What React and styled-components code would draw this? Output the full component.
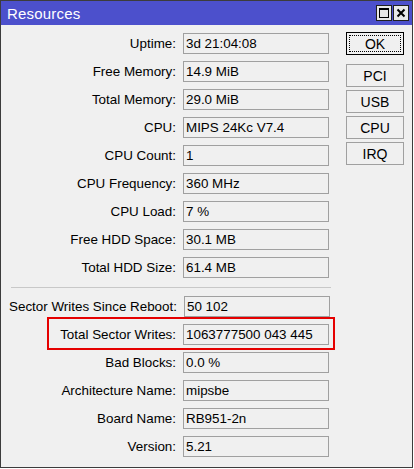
import React from 'react';
import styled, { createGlobalStyle } from 'styled-components';

const GlobalStyle = createGlobalStyle`
  html, body {
    margin: 0;
    padding: 0;
    background: #ffffff;
  }
  body {
    font-family: 'Liberation Sans', Arial, sans-serif;
    font-size: 13.4px;
    color: #000000;
  }
`;

const Window = styled.div`
  width: 413px;
  height: 468px;
  box-sizing: border-box;
  border: 1px solid #3c3c3c;
  background: #f0f0f0;
  display: flex;
  flex-direction: column;
`;

const TitleBar = styled.div`
  height: 24px;
  background: #4c50cc;
  display: flex;
  align-items: center;
  justify-content: space-between;
  padding: 0 3px 0 6px;
`;

const Title = styled.span`
  color: #ffffff;
  font-size: 15px;
  letter-spacing: 0.2px;
`;

const TitleButtons = styled.div`
  display: flex;
  gap: 1px;
`;

const TitleButton = styled.div`
  width: 14px;
  height: 14px;
  background: #e8e8e8;
  border: 1px solid #202020;
  display: flex;
  align-items: center;
  justify-content: center;
`;

const Body = styled.div`
  display: flex;
  padding: 8px 0 0 8px;
  gap: 15px;
`;

const Form = styled.div`
  display: flex;
  flex-direction: column;
  gap: 7px;
`;

const Row = styled.div`
  position: relative;
  display: flex;
  align-items: center;
  gap: 7px;
`;

const Label = styled.span`
  flex: 0 0 167px;
  text-align: right;
  white-space: nowrap;
`;

const Field = styled.div`
  flex: 0 0 146px;
  height: 21px;
  box-sizing: border-box;
  border: 1px solid #a0a0a0;
  padding: 0 2px;
  display: flex;
  align-items: center;
  white-space: nowrap;
`;

const Highlight = styled.div`
  position: absolute;
  left: 38px;
  right: -4px;
  top: -7px;
  bottom: -5px;
  border: 2px solid #e50000;
  pointer-events: none;
`;

const Separator = styled.div`
  width: 320px;
  height: 1px;
  background: #c8c8c8;
  margin: 2px 0 1px 2px;
`;

const Buttons = styled.div`
  display: flex;
  flex-direction: column;
  gap: 3px;
  margin-top: -1px;
`;

const Button = styled.div`
  position: relative;
  width: 58px;
  height: 23px;
  box-sizing: border-box;
  border: 1px solid ${p => (p.$default ? '#000000' : '#a0a0a0')};
  background: #f0f0f0;
  display: flex;
  align-items: center;
  justify-content: center;
  font-size: 14px;
  margin-bottom: ${p => (p.$default ? '6px' : '0')};

  &::after {
    content: '';
    display: ${p => (p.$default ? 'block' : 'none')};
    position: absolute;
    inset: 2px;
    border: 1px dotted #000000;
  }
`;

const topRows = [
  ['Uptime:', '3d 21:04:08'],
  ['Free Memory:', '14.9 MiB'],
  ['Total Memory:', '29.0 MiB'],
  ['CPU:', 'MIPS 24Kc V7.4'],
  ['CPU Count:', '1'],
  ['CPU Frequency:', '360 MHz'],
  ['CPU Load:', '7 %'],
  ['Free HDD Space:', '30.1 MB'],
  ['Total HDD Size:', '61.4 MB']
];

const bottomRows = [
  ['Sector Writes Since Reboot:', '50 102'],
  ['Total Sector Writes:', '1063777500 043 445', true],
  ['Bad Blocks:', '0.0 %'],
  ['Architecture Name:', 'mipsbe'],
  ['Board Name:', 'RB951-2n'],
  ['Version:', '5.21']
];

const renderRow = ([label, value, marked]) => (
  <Row key={label}>
    <Label>{label}</Label>
    <Field>{value}</Field>
    {marked && <Highlight />}
  </Row>
);

const App = () => (
  <>
    <GlobalStyle />
    <Window>
      <TitleBar>
        <Title>Resources</Title>
        <TitleButtons>
          <TitleButton>
            <svg width="10" height="10" viewBox="0 0 10 10">
              <rect x="0.5" y="0.5" width="9" height="9" fill="none" stroke="#000" />
              <rect x="0.5" y="0.5" width="9" height="1.5" fill="#000" />
            </svg>
          </TitleButton>
          <TitleButton>
            <svg width="10" height="10" viewBox="0 0 10 10">
              <path d="M1.5 1.5 L8.5 8.5 M8.5 1.5 L1.5 8.5" stroke="#000" strokeWidth="2" />
            </svg>
          </TitleButton>
        </TitleButtons>
      </TitleBar>
      <Body>
        <Form>
          {topRows.map(renderRow)}
          <Separator />
          {bottomRows.map(renderRow)}
        </Form>
        <Buttons>
          <Button $default>OK</Button>
          <Button>PCI</Button>
          <Button>USB</Button>
          <Button>CPU</Button>
          <Button>IRQ</Button>
        </Buttons>
      </Body>
    </Window>
  </>
);

export default App;
